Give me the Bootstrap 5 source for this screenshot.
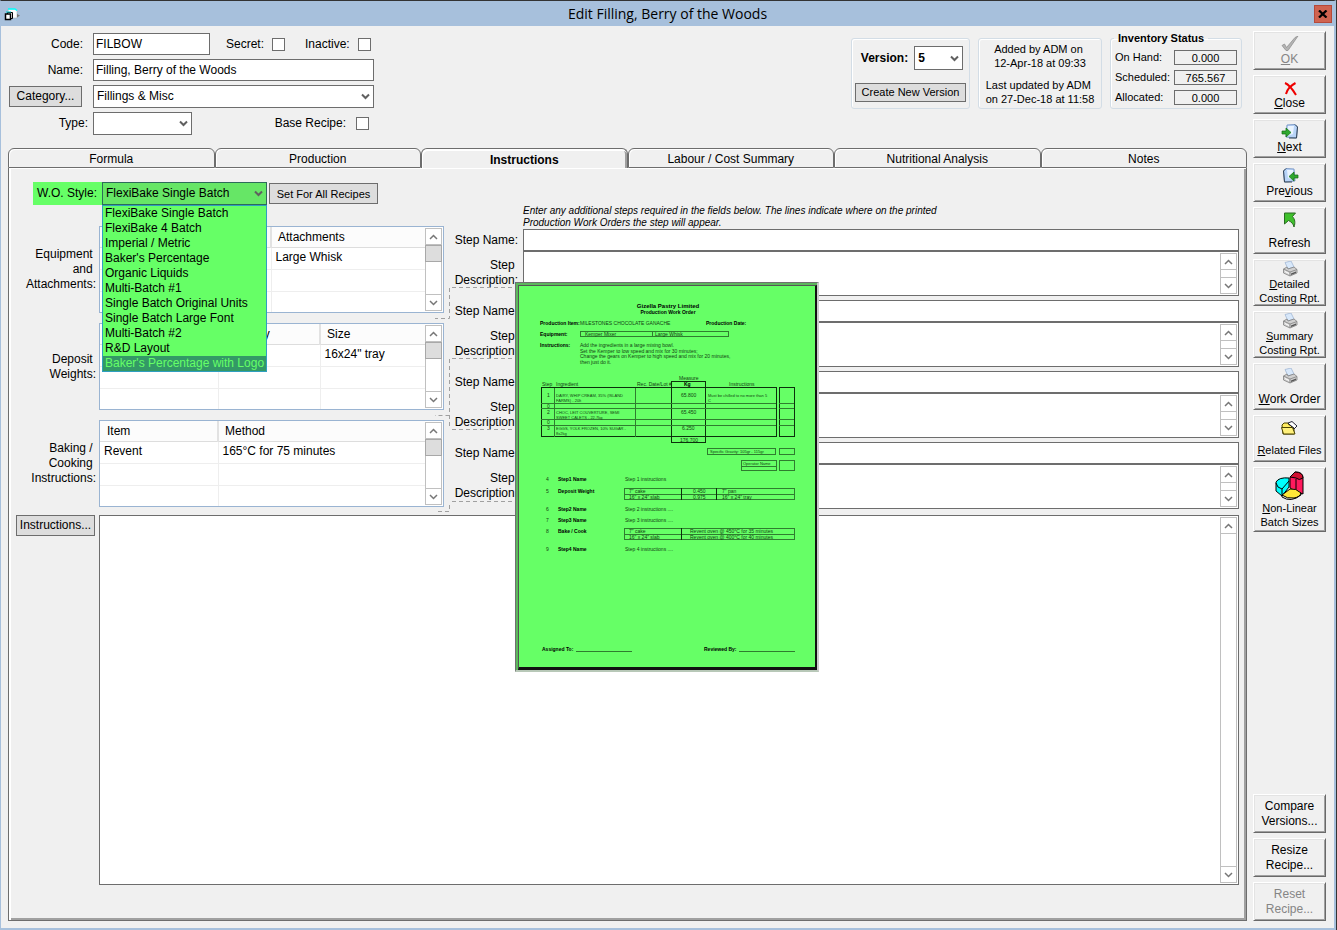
<!DOCTYPE html>
<html lang="en">
<head>
<meta charset="utf-8">
<meta name="viewport" content="width=device-width, initial-scale=1">
<title>Edit Filling, Berry of the Woods</title>
<link href="https://cdn.jsdelivr.net/npm/bootstrap@5.3.0/dist/css/bootstrap.min.css" rel="stylesheet">
<style>
:root{--face:#f0f0f0;--line:#6d6d6d;--soft:#c0c0c0;--hot:#66ff66}
body{font-family:"Liberation Sans",Arial,sans-serif;font-size:12px;line-height:15px;color:#000;background:var(--face)}
.win{min-height:100vh;border:solid #a7c0dc;border-width:0 2px 2px 1px;border-top:1px solid #333;margin-right:1px;box-shadow:1px 0 #333}
.titlebar{background:#a7c0dc;height:25px;font-family:"Open Sans",sans-serif;font-size:14px;line-height:26px}
.titlebar .appicon{left:3px;top:7px}
.titlebar .shut{right:2px;top:4px;width:18px;height:18px;background:#cf6350;border:1px solid #b5493a;line-height:0}
.fs11{font-size:11px;line-height:14px}
/* form fields */
.fld{border:1px solid var(--line);border-radius:0;background-color:#fff;color:#000;font-size:12px;line-height:15px;padding:0 2px;height:22px;min-height:0;box-shadow:none}
select.fld{appearance:none;height:23px;background:#fff url("data:image/svg+xml,%3Csvg xmlns='http://www.w3.org/2000/svg' width='9' height='7'%3E%3Cpath d='M1 1.5l3.500 3.500 3.500-3.500' fill='none' stroke='%23606060' stroke-width='2'/%3E%3C/svg%3E") no-repeat right 3px center;padding:0 14px 0 3px}
.tick{width:13px;height:13px;margin:0;border:1px solid var(--line);border-radius:0;background:#fff;appearance:none;flex:none}
.flat{background:#ddd;border:1px solid var(--line);border-radius:0;color:#000;font-size:12px;line-height:15px;padding:0;height:21px;white-space:nowrap}
.flat.fs11{font-size:11px;line-height:14px}
.head-form{padding:7px 0 0 8px;width:375px}
.lab{width:74px;text-align:right;flex:none;margin-right:10px}
.wide{width:281px}
.codefld{width:117px;flex:none}
.catbtn{width:73px;margin-right:11px}
.typ.lab{width:79px;margin-right:5px}
.tysel{width:99px}
.basel{margin-right:10px}
.basec{margin-right:7px}
.statusrow{padding:12px 5px 0 0}
.box{border:1px solid #d3dde6;border-radius:3px;box-shadow:inset 1px 1px #fff;height:71px}
.box-v{width:119px}
.box-a{width:124px;padding:3px 0 2px}
.box-i{width:132px;height:77px;margin-top:-6px}
.box-i legend{font-size:11px;line-height:12px;font-weight:700;width:auto;float:none;padding:0 4px;margin:0 0 0 3px}
.verrow{padding:7px 0 0 3px;gap:6px}
.fld.versel{width:49px;height:24px}
.newver.flat{height:19px;width:111px;margin-top:13px;line-height:17px}
.invrows{padding:6px 4px 0;gap:5px}
.amount{width:63px;height:15px;border:1px solid var(--line);text-align:center;line-height:15px}
/* tab strip */
.tabarea{margin:13px 0 7px 7px}
.tabstrip{height:20px}
.tabstrip .tabbtn{flex:1 1 0;background:var(--face);border:1px solid var(--line);border-radius:6px 6px 0 0;padding:0;box-shadow:inset 1px 1px #fff;line-height:20px;font-size:12px;color:#000}
.tabstrip .tabbtn.active{font-weight:700;border-bottom:0;height:21px;line-height:22px;position:relative;box-shadow:inset 1px 2px #fff,inset -2px 0 #a0a0a0}
.pane{border:1px solid var(--line);border-top:0;box-shadow:inset 2px 1px #fff,inset -2px -2px #a0a0a0;padding:14px 7px 35px 7px}
.lcol{width:428px}
.sidelab{width:81px;text-align:right;padding-right:1px;flex:none}
.lit{background:var(--hot);width:69px;height:23px;line-height:23px;margin-left:17px;text-align:right;padding-right:5px}
.picker{width:165px}
.picker select.fld{background-color:#66e666;border-color:#2d6b5a;width:165px}
.picker ul{left:0;top:23px;width:165px;background:var(--hot);border:1px solid #2f9fc0;z-index:5}
.picker li{padding-left:2px;white-space:nowrap;overflow:hidden}
.picker li.sel{background:#339966;color:var(--hot)}
.setall{width:109px;margin-left:2px}
/* grids */
.grids{gap:10px;padding-top:21px}
.gridbox{height:87px;border:1px solid #9ab4d2;background:#fff;width:345px;overflow:hidden}
.gridbox table{table-layout:fixed;border-collapse:collapse;width:100%}
.gridbox th{font-weight:400;height:20px;background:#fcfcfc;border-bottom:1px solid #ddd;border-left:2px solid #e2e2e2;padding:1px 0 0 6px}
.gridbox td{height:22px;border-bottom:1px solid #eee;border-left:1px solid #eee;padding:0 0 2px 4px}
.gridbox th:first-child,.gridbox td:first-child{border-left:0}
.gridbox th:first-child{padding-left:7px}
.c1{width:118px}.c2{width:102px}.ca{width:171px}
.sbar{width:17px;border:1px solid var(--soft);background:#fff;flex:none}
.sbar span{display:flex;height:16px;align-items:center;justify-content:center;border-bottom:1px solid var(--soft)}
.sbar span:last-child{border-bottom:0;border-top:1px solid var(--soft);margin-top:auto}
.sbar .thumb{height:17px;background:#ddd;border:1px solid #a8a8a8;margin:0 -1px}
.sbar svg{width:9px;height:6px;fill:none;stroke:#777;stroke-width:1.5}
.gridbox .sbar{margin:1px 1px 1px 0}
/* steps */
.note{padding:23px 0 0 76px;font-size:10px;line-height:12px;font-style:italic;margin-bottom:0}
.stepcol{padding-left:3px}
.steps{gap:4px}
.steplab{width:74px;text-align:right;flex:none}
.steplab label{display:block;padding-right:3px}
.steplab label:first-child{padding-top:4px;padding-bottom:10px}
.stepf{margin-left:2px}
.descbox{height:45px;border:1px solid var(--line);background:#fff;padding:1px}
.area{border:0;border-radius:0;resize:none;padding:2px;font-size:12px;min-height:0;overflow:hidden}
.links{left:-9px;top:82px;pointer-events:none}
.bigrow{padding-top:6px}
.instbtn{width:79px}
.big{border:1px solid var(--line);background:#fff;padding:1px;margin-left:4px}
/* work order preview */
.preview{left:506px;top:114px;width:304px;height:390px;background:#5cb85c;border:1px solid #707070;border-right:2px solid #ccc;border-bottom:2px solid #b8c8b8;padding:2px 0 0 2px;z-index:4}
.preview svg{display:block;background:var(--hot);border:1px solid #555;border-right:2px solid #111;border-bottom:3px solid #111;width:100%;height:100%}
.preview text{font-size:5px;fill:#123f12}
.preview .b{font-weight:700;fill:#000}
.preview .ttl{font-size:6px}
.preview .cell text{font-size:4px}
.preview path,.preview rect{fill:none;stroke:#2f7d2f;stroke-width:1}
.preview .k{stroke:#0c300c}
/* command column */
.rail{width:87px;padding:5px 7px 7px 6px;gap:5px}
.cmd{width:73px;height:39px;background:var(--face);border:1px solid;border-color:#fff #696969 #696969 #fff;box-shadow:inset 1px 1px #e3e3e3,inset -1px -1px #a0a0a0;padding:1px 0 0;color:#000;font-size:12px;line-height:14px;display:flex;flex-direction:column;align-items:center;justify-content:center;white-space:nowrap;flex:none}
.cmd.fs11{font-size:11px}
.cmd.tall{height:47px}
.cmd.huge{height:65px}
.cmd:disabled{color:#858585}
.cmd.l15{line-height:15px}
</style>
</head>
<body>
<svg width="0" height="0" class="position-absolute" aria-hidden="true">
  <symbol id="up" viewBox="0 0 9 6"><path d="M1 5l3.500-3.500L8 5"/></symbol>
  <symbol id="down" viewBox="0 0 9 6"><path d="M1 1l3.500 3.500L8 1"/></symbol>
  <symbol id="printer" viewBox="0 0 16 16">
    <path d="M3 1.500L9 0l3 6-6 2z" fill="#d8e8fa" stroke="#9ab0d0" stroke-width=".7"/>
    <path d="M1.500 8l3.500-2 1 2 6-2 3 2.500V12l-7 3-6.500-3z" fill="#d0d0d0" stroke="#808080" stroke-width=".8"/>
    <path d="M1.500 8L8 11l7-2.500M8 11v4" fill="none" stroke="#808080" stroke-width=".8"/>
    <path d="M9 12.500l5-2V12l-5 2z" fill="#555"/><path d="M3 10.500l4 2" stroke="#fff"/>
  </symbol>
  <symbol id="page" viewBox="0 0 16 15">
    <path d="M4 1l8-.5 2.500 2.500-1 11L3 13z" fill="#b8d4f8" stroke="#7f9cc8"/>
    <path d="M5 2h6l-1 8-6 2z" fill="#eaf4ff"/><path d="M12 .5L14.500 3l-1 11H6" fill="none" stroke="#345"/>
  </symbol>
</svg>
<div class="win d-flex flex-column">
  <header class="titlebar position-relative text-center">
    Edit Filling, Berry of the Woods
    <svg class="appicon position-absolute" width="16" height="13" viewBox="0 0 16 13"><path d="M4 1h7l2 2v7H5z" fill="#fff" stroke="#9aa" stroke-width=".5"/><path d="M4 1h7l2 1.500" fill="none" stroke="#0ff" stroke-width="1.500"/><path d="M13 6l3 1.500-3 2z" fill="#777"/><path d="M3.500 4.500h5v6h-5z" fill="#fff" stroke="#000"/><path d="M1.500 6h5v5.500h-5z" fill="#fff" stroke="#000" stroke-width="1.500"/><path d="M2 4h5" stroke="#0cc"/></svg>
    <button class="shut position-absolute p-0" aria-label="Close window"><svg width="10" height="8" viewBox="0 0 10 8"><path d="M1 .5l7.500 7M8.500.5L1 7.500" stroke="#000" stroke-width="2.300"/></svg></button>
  </header>
  <div class="d-flex flex-grow-1">
    <main class="flex-grow-1 d-flex flex-column" style="min-width:0">
      <div class="d-flex justify-content-between">
        <form class="head-form d-flex flex-column gap-1">
          <div class="d-flex align-items-center">
            <label class="lab" for="code">Code:</label>
            <input id="code" class="form-control fld codefld me-3" value="FILBOW">
            <label for="secret" class="me-2">Secret:</label><input id="secret" type="checkbox" class="tick">
            <label for="inactive" class="ms-3 me-2 ps-1">Inactive:</label><input id="inactive" type="checkbox" class="tick">
          </div>
          <div class="d-flex align-items-center">
            <label class="lab" for="nm">Name:</label>
            <input id="nm" class="form-control fld wide" value="Filling, Berry of the Woods">
          </div>
          <div class="d-flex align-items-center">
            <button type="button" class="flat catbtn">Category...</button>
            <select class="form-select fld wide" aria-label="Category"><option>Fillings &amp; Misc</option></select>
          </div>
          <div class="d-flex align-items-center">
            <label class="lab typ" for="ty">Type:</label>
            <select id="ty" class="form-select fld tysel"><option></option></select>
            <label for="base" class="ms-auto basel">Base Recipe:</label><input id="base" type="checkbox" class="tick basec">
          </div>
        </form>
        <div class="d-flex gap-2 statusrow">
          <div class="box box-v d-flex flex-column align-items-center">
            <div class="d-flex align-items-center justify-content-center verrow"><label class="fw-bold" for="ver">Version:</label><select id="ver" class="form-select fld fw-bold versel"><option>5</option></select></div>
            <button class="flat fs11 newver">Create New Version</button>
          </div>
          <div class="box box-a fs11 d-flex flex-column align-items-center justify-content-between">
            <div>Added by ADM on<br>12-Apr-18 at 09:33</div>
            <div>Last updated by ADM<br>on 27-Dec-18 at 11:58</div>
          </div>
          <fieldset class="box box-i fs11">
            <legend>Inventory Status</legend>
            <div class="d-flex flex-column invrows">
              <div class="d-flex justify-content-between"><span>On Hand:</span><output class="amount">0.000</output></div>
              <div class="d-flex justify-content-between"><span>Scheduled:</span><output class="amount">765.567</output></div>
              <div class="d-flex justify-content-between"><span>Allocated:</span><output class="amount">0.000</output></div>
            </div>
          </fieldset>
        </div>
      </div>
      <div class="tabarea d-flex flex-column flex-grow-1">
        <nav class="tabstrip d-flex" role="tablist">
          <button class="tabbtn" role="tab">Formula</button><button class="tabbtn" role="tab">Production</button><button class="tabbtn active" role="tab" aria-selected="true">Instructions</button><button class="tabbtn" role="tab">Labour / Cost Summary</button><button class="tabbtn" role="tab">Nutritional Analysis</button><button class="tabbtn" role="tab">Notes</button>
        </nav>
        <section class="pane position-relative flex-grow-1 d-flex flex-column">
          <div class="d-flex">
            <div class="lcol flex-shrink-0">
              <div class="d-flex align-items-center">
                <label class="lit" for="wo">W.O. Style:</label>
                <div class="picker position-relative">
                  <select id="wo" class="form-select fld"><option>FlexiBake Single Batch</option></select>
                  <ul class="position-absolute list-unstyled mb-0">
                    <li>FlexiBake Single Batch</li><li>FlexiBake 4 Batch</li><li>Imperial / Metric</li><li>Baker's Percentage</li><li>Organic Liquids</li><li>Multi-Batch #1</li><li>Single Batch Original Units</li><li>Single Batch Large Font</li><li>Multi-Batch #2</li><li>R&amp;D Layout</li><li class="sel">Baker's Percentage with Logo</li>
                  </ul>
                </div>
                <button class="flat fs11 setall">Set For All Recipes</button>
              </div>
              <div class="d-flex flex-column grids">
                <div class="d-flex align-items-center">
                  <div class="sidelab">Equipment&nbsp;<br>and&nbsp;<br>Attachments:</div>
                  <div class="gridbox d-flex ms-auto">
                    <table><colgroup><col class="ca"><col></colgroup><thead><tr><th></th><th>Attachments</th></tr></thead>
                    <tbody><tr><td></td><td>Large Whisk</td></tr><tr><td></td><td></td></tr><tr><td></td><td></td></tr></tbody></table>
                    <div class="sbar d-flex flex-column"><span><svg><use href="#up"/></svg></span><span class="thumb"></span><span><svg><use href="#down"/></svg></span></div>
                  </div>
                </div>
                <div class="d-flex align-items-center">
                  <div class="sidelab">Deposit&nbsp;<br>Weights:</div>
                  <div class="gridbox d-flex ms-auto">
                    <table><colgroup><col class="c1"><col class="c2"><col></colgroup><thead><tr><th></th><th>Quantity</th><th>Size</th></tr></thead>
                    <tbody><tr><td></td><td></td><td>16x24" tray</td></tr><tr><td></td><td></td><td></td></tr><tr><td></td><td></td><td></td></tr></tbody></table>
                    <div class="sbar d-flex flex-column"><span><svg><use href="#up"/></svg></span><span class="thumb"></span><span><svg><use href="#down"/></svg></span></div>
                  </div>
                </div>
                <div class="d-flex align-items-center">
                  <div class="sidelab">Baking /&nbsp;<br>Cooking&nbsp;<br>Instructions:</div>
                  <div class="gridbox d-flex ms-auto">
                    <table><colgroup><col class="c1"><col></colgroup><thead><tr><th>Item</th><th>Method</th></tr></thead>
                    <tbody><tr><td>Revent</td><td>165°C for 75 minutes</td></tr><tr><td></td><td></td></tr><tr><td></td><td></td></tr></tbody></table>
                    <div class="sbar d-flex flex-column"><span><svg><use href="#up"/></svg></span><span class="thumb"></span><span><svg><use href="#down"/></svg></span></div>
                  </div>
                </div>
              </div>
            </div>
            <div class="flex-grow-1 position-relative stepcol">
              <p class="note">Enter any additional steps required in the fields below. The lines indicate where on the printed<br>Production Work Orders the step will appear.</p>
              <div class="steps d-flex flex-column">
                <div class="d-flex"><div class="steplab"><label for="s1">Step Name:</label><label for="d1">Step&nbsp;<br>Description:</label></div><div class="flex-grow-1 stepf"><input id="s1" class="form-control fld"><div class="descbox d-flex"><textarea id="d1" class="form-control area"></textarea><div class="sbar d-flex flex-column"><span><svg><use href="#up"/></svg></span><span><svg><use href="#down"/></svg></span></div></div></div></div>
                <div class="d-flex"><div class="steplab"><label for="s2">Step Name:</label><label for="d2">Step&nbsp;<br>Description:</label></div><div class="flex-grow-1 stepf"><input id="s2" class="form-control fld"><div class="descbox d-flex"><textarea id="d2" class="form-control area"></textarea><div class="sbar d-flex flex-column"><span><svg><use href="#up"/></svg></span><span><svg><use href="#down"/></svg></span></div></div></div></div>
                <div class="d-flex"><div class="steplab"><label for="s3">Step Name:</label><label for="d3">Step&nbsp;<br>Description:</label></div><div class="flex-grow-1 stepf"><input id="s3" class="form-control fld"><div class="descbox d-flex"><textarea id="d3" class="form-control area"></textarea><div class="sbar d-flex flex-column"><span><svg><use href="#up"/></svg></span><span><svg><use href="#down"/></svg></span></div></div></div></div>
                <div class="d-flex"><div class="steplab"><label for="s4">Step Name:</label><label for="d4">Step&nbsp;<br>Description:</label></div><div class="flex-grow-1 stepf"><input id="s4" class="form-control fld"><div class="descbox d-flex"><textarea id="d4" class="form-control area"></textarea><div class="sbar d-flex flex-column"><span><svg><use href="#up"/></svg></span><span><svg><use href="#down"/></svg></span></div></div></div></div>
              </div>
              <svg class="links position-absolute" width="84" height="248" fill="none" stroke="#a0a0a0" stroke-dasharray="4 3"><path d="M84 23.500H14.500V54.500H0M84 94.500H14.500V162M14.500 151.500H0M84 165.500H16M84 237.500H16M14.500 241V247.500H0"/></svg>
            </div>
          </div>
          <div class="d-flex flex-grow-1 align-items-start bigrow">
            <button class="flat instbtn">Instructions...</button>
            <div class="big flex-grow-1 align-self-stretch d-flex"><textarea class="form-control area" aria-label="Instructions"></textarea><div class="sbar d-flex flex-column"><span><svg><use href="#up"/></svg></span><span><svg><use href="#down"/></svg></span></div></div>
          </div>
          <figure class="preview position-absolute m-0" aria-label="Work order preview">
            <svg viewBox="519 286 296 381">
              <g text-anchor="middle"><text class="b ttl" x="668" y="308">Gizella Pastry Limited</text><text class="b" x="668" y="314">Production Work Order</text></g>
              <text class="b" x="540" y="325">Production Item:</text><text x="580" y="325">MILESTONES CHOCOLATE GANACHE</text><text class="b" x="706" y="325">Production Date:</text>
              <text class="b" x="540" y="336">Equipment:</text><rect x="580.500" y="331.500" width="148" height="5"/><path d="M652.500 331v6"/><text x="585" y="336">Kemper Mixer</text><text x="655" y="336">Large Whisk</text>
              <text class="b" x="540" y="347">Instructions:</text>
              <text x="580" y="347">Add the ingredients in a large mixing bowl.</text><text x="580" y="353">Set the Kemper to low speed and mix for 30 minutes;</text><text x="580" y="358">Change the gears on Kemper to high speed and mix for 20 minutes,</text><text x="580" y="364">then just do it.</text>
              <text x="679" y="380">Measure</text><text x="542" y="386">Step</text><text x="556" y="386">Ingredient</text><text x="637" y="386">Rec. Date/Lot #</text><text class="b" x="684" y="386">Kg</text><text x="729" y="386">Instructions</text>
              <rect class="k" x="541.500" y="387.500" width="235" height="49"/><rect class="k" x="779.500" y="387.500" width="15" height="49"/><rect class="k" x="671.500" y="381.500" width="34" height="61"/>
              <path d="M554.500 388v49M635.500 388v49M541 403.500h235M541 408.500h235M541 419.500h235M541 425.500h235M779 403.500h15M779 408.500h15M779 419.500h15M779 425.500h15"/>
              <text x="547" y="397">1</text><text x="547" y="408">0</text><text x="547" y="414">2</text><text x="547" y="424">0</text><text x="547" y="430">3</text>
              <g class="cell"><text x="556" y="397">DAIRY, WHIP CREAM, 35% (ISLAND</text><text x="556" y="402">FARMS) - 20lt</text><text x="556" y="414">CHOC, LEIT COUVERTURE, SEMI</text><text x="556" y="419">SWEET CALETS - 22.7kg</text><text x="556" y="430">EGGS, YOLK FROZEN, 10% SUGAR -</text><text x="556" y="435">8x2kg</text><text x="708" y="397">Must be chilled to no more than 5</text><text x="708" y="402">C</text><text x="710" y="453">Specific Gravity: 105gr - 115gr</text><text x="743" y="465">Operator Name</text></g>
              <text x="681" y="397">65.800</text><text x="681" y="414">65.450</text><text x="682" y="430">6.250</text><text x="680" y="442">176.700</text>
              <rect x="707.500" y="448.500" width="68" height="6"/><rect x="779.500" y="448.500" width="15" height="6"/>
              <rect x="741.500" y="460.500" width="35" height="10"/><path d="M741 466.500h35"/><rect x="779.500" y="460.500" width="15" height="10"/>
              <text x="546" y="481">4</text><text class="b" x="558" y="481">Step1 Name</text><text x="625" y="481">Step 1 instructions</text>
              <text x="546" y="493">5</text><text class="b" x="558" y="493">Deposit Weight</text><rect x="624.500" y="488.500" width="170" height="11"/><path d="M624 494.500h170"/><path class="k" d="M681.500 488v12M716.500 488v12"/>
              <text x="629" y="493">7" cake</text><text x="693" y="493">0.450</text><text x="722" y="493">7" pan</text><text x="629" y="499">16" x 24" slab</text><text x="693" y="499">0.975</text><text x="722" y="499">16" x 24" tray</text>
              <text x="546" y="511">6</text><text class="b" x="558" y="511">Step2 Name</text><text x="625" y="511">Step 2 instructions ....</text>
              <text x="546" y="522">7</text><text class="b" x="558" y="522">Step3 Name</text><text x="625" y="522">Step 3 instructions ....</text>
              <text x="546" y="533">8</text><text class="b" x="558" y="533">Bake / Cook</text><rect x="624.500" y="528.500" width="170" height="11"/><path d="M624 534.500h170"/><path class="k" d="M681.500 528v12"/>
              <text x="629" y="533">7" cake</text><text x="690" y="533">Revent oven @ 450°C for 35 minutes</text><text x="629" y="539">16" x 24" slab</text><text x="690" y="539">Revent oven @ 400°C for 40 minutes</text>
              <text x="546" y="551">9</text><text class="b" x="558" y="551">Step4 Name</text><text x="625" y="551">Step 4 instructions ....</text>
              <text class="b" x="542" y="651">Assigned To:</text><path d="M576 651.500h56M739 651.500h56"/><text class="b" x="704" y="651">Reviewed By:</text>
            </svg>
          </figure>
        </section>
      </div>
    </main>
    <aside class="rail d-flex flex-column flex-shrink-0">
      <button class="cmd" disabled><svg width="18" height="16" viewBox="0 0 18 16"><path d="M1 9.500L3.500 8l2 3.500L14 1.500 17 0 7 14.500H5z" fill="#b4b4b4" stroke="#8a8a8a" stroke-width=".7"/></svg><span><u>O</u>K</span></button>
      <button class="cmd"><svg width="16" height="16" viewBox="0 0 16 16"><path d="M3 3c5 2 8 7 11 12M13.500 3C8 6 5 10 4 14" fill="none" stroke="#e00" stroke-width="2"/></svg><span><u>C</u>lose</span></button>
      <button class="cmd"><svg width="18" height="16" viewBox="0 0 18 16"><use href="#page" x="2" width="16" height="15"/><path d="M1 7h4V4l5 4.500L5 13v-3H1z" fill="#2fa82f" stroke="#136b13" stroke-width=".7"/></svg><span><u>N</u>ext</span></button>
      <button class="cmd"><svg width="18" height="16" viewBox="0 0 18 16"><g transform="matrix(-1 0 0 1 17 0)"><use href="#page" width="16" height="15"/></g><path d="M17 7h-4V4L8 8.500l5 4.500v-3h4z" fill="#2fa82f" stroke="#136b13" stroke-width=".7"/></svg><span>Pre<u>v</u>ious</span></button>
      <button class="cmd tall"><svg width="14" height="16" viewBox="0 0 14 16"><path d="M1.500 1h11L9.500 4.500c2.500 3 3 6 1.500 10.500C10.500 12 8.500 10 5.500 8.500L1.500 12z" fill="#3fc02c" stroke="#2a6a22"/></svg><span class="pt-2">Refresh</span></button>
      <button class="cmd tall fs11"><svg width="16" height="16"><use href="#printer"/></svg><span><u>D</u>etailed<br>Costing Rpt.</span></button>
      <button class="cmd tall fs11"><svg width="16" height="16"><use href="#printer"/></svg><span><u>S</u>ummary<br>Costing Rpt.</span></button>
      <button class="cmd tall"><svg width="16" height="16"><use href="#printer"/></svg><span class="pt-2"><u>W</u>ork Order</span></button>
      <button class="cmd tall fs11"><svg width="17" height="14" viewBox="0 0 17 14"><path d="M1 4l2-2h4l1 2h5v9H2z" fill="#ffec60" stroke="#4a4300"/><path d="M7 2l4-1.500L16 5l-3 3z" fill="#fff" stroke="#223"/><path d="M9 4l4 3" stroke="#223"/><path d="M.5 6.500h11l2.500 6.500H2.500z" fill="#fff07a" stroke="#4a4300"/></svg><span class="pt-2"><u>R</u>elated Files</span></button>
      <button class="cmd huge fs11"><svg width="30" height="30" viewBox="0 0 30 30"><path d="M14 7v9l-7 9-6-5v-9q3-5 13-4z" fill="#0ff" stroke="#000"/><path d="M1 12q1 5 6 6l7-8M7 18v7" fill="none" stroke="#000"/><path d="M15 6l5-5q8 0 8 6v16l-7-3-6-3z" fill="#ff1a5d" stroke="#000"/><path d="M15 6l5-5q8 0 8 6-4 3-7 0z" fill="#d01030" stroke="#000"/><path d="M21 8v12" stroke="#000"/><path d="M15 18l-8 6q5 4 12 3 6-1 7-5-5-5-11-4z" fill="#ffe838" stroke="#000"/><path d="M7 24v2q9 6 19-2v-2" fill="none" stroke="#000"/></svg><span><u>N</u>on-Linear<br>Batch Sizes</span></button>
      <button class="cmd l15 mt-auto"><span>Compare<br>Versions...</span></button>
      <button class="cmd l15"><span>Resize<br>Recipe...</span></button>
      <button class="cmd l15" disabled><span>Reset<br>Recipe...</span></button>
    </aside>
  </div>
</div>
<script src="https://cdn.jsdelivr.net/npm/bootstrap@5.3.0/dist/js/bootstrap.bundle.min.js"></script>
</body>
</html>
